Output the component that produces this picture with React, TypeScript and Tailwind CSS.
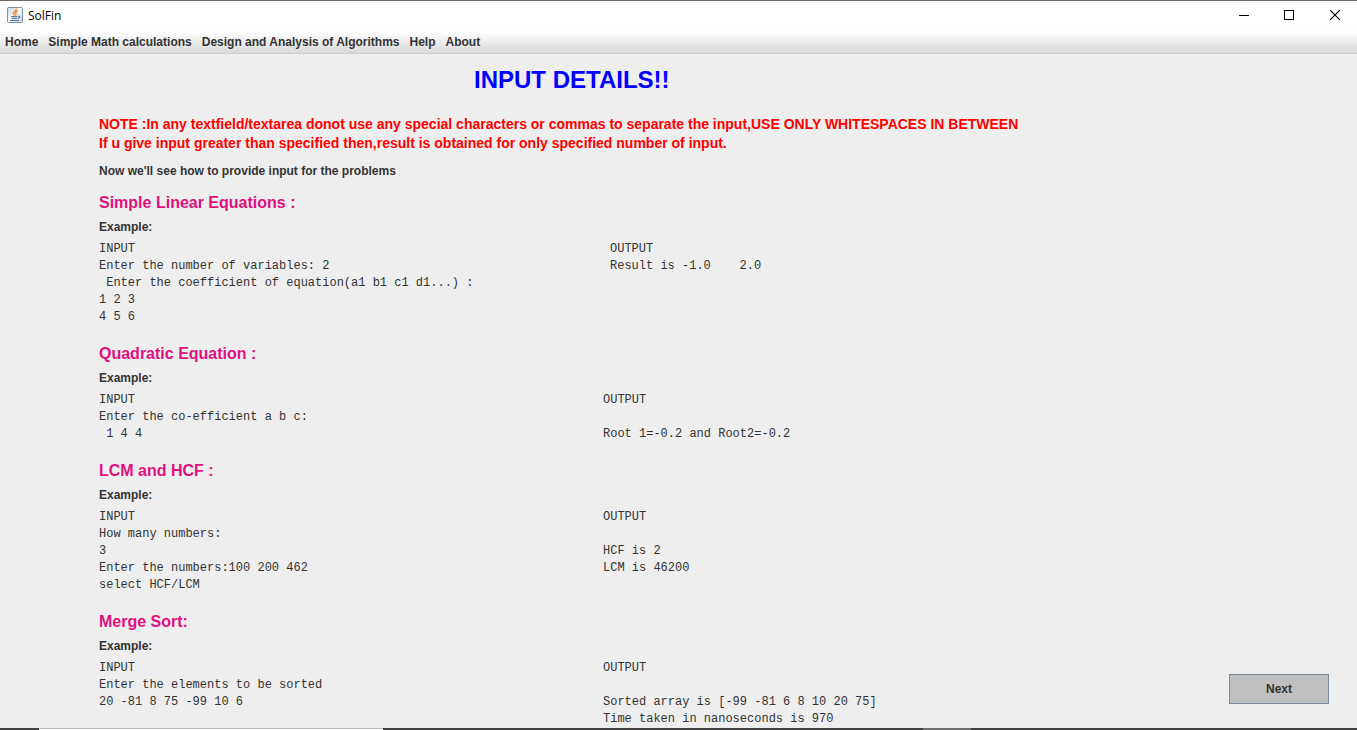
import React from "react";

type Problem = {
  title: string;
  input: string[];
  output: string[];
  wide?: boolean;
};

const problems: Problem[] = [
  {
    title: "Simple Linear Equations :",
    input: [
      "INPUT",
      "Enter the number of variables: 2",
      " Enter the coefficient of equation(a1 b1 c1 d1...) :",
      "1 2 3",
      "4 5 6",
    ],
    output: ["OUTPUT", "Result is -1.0    2.0"],
    wide: true,
  },
  {
    title: "Quadratic Equation :",
    input: ["INPUT", "Enter the co-efficient a b c:", " 1 4 4"],
    output: ["OUTPUT", "", "Root 1=-0.2 and Root2=-0.2"],
  },
  {
    title: "LCM and HCF :",
    input: ["INPUT", "How many numbers:", "3", "Enter the numbers:100 200 462", "select HCF/LCM"],
    output: ["OUTPUT", "", "HCF is 2", "LCM is 46200"],
  },
  {
    title: "Merge Sort:",
    input: ["INPUT", "Enter the elements to be sorted", "20 -81 8 75 -99 10 6"],
    output: ["OUTPUT", "", "Sorted array is [-99 -81 6 8 10 20 75]", "Time taken in nanoseconds is 970"],
  },
];

const menus = ["Home", "Simple Math calculations", "Design and Analysis of Algorithms", "Help", "About"];

function JavaIcon() {
  return (
    <svg width="16" height="16" viewBox="0 0 16 16" aria-hidden="true">
      <defs>
        <linearGradient id="tile" x1="0" y1="0" x2="1" y2="1">
          <stop offset="0" stopColor="#c3d3df" />
          <stop offset="0.45" stopColor="#f8fafb" />
          <stop offset="1" stopColor="#c6d4df" />
        </linearGradient>
      </defs>
      <rect x="0.5" y="0.5" width="15" height="15" rx="1" fill="url(#tile)" stroke="#7690a4" />
      <path d="M9.3 1.800C10 4 6 4.300 6.300 6.200C6.500 7.200 7.600 7.700 7.500 8.600M10.700 4.200C8.500 5 8 5.800 9 6.900C9.400 7.500 9 8.100 8.500 8.500" fill="none" stroke="#ee8130" strokeWidth="1.400" />
      <path d="M4 9.500H10.500M4.800 11.400H10M3 13.500H12M11 9.200C13.500 8.800 13.200 11.200 10.800 11.400" fill="none" stroke="#55799a" strokeWidth="1.100" />
    </svg>
  );
}

function TitleBar() {
  return (
    <header className="flex h-[31px] shrink-0 items-center border-t border-[#6b6b6b] bg-white pb-[2px] pl-[7px]">
      <JavaIcon />
      <h1 className="ml-[5px] grow pt-[2px] font-['Open_Sans','Noto_Sans',sans-serif] text-[12px] leading-4 text-black">SolFin</h1>
      <button aria-label="Minimize" className="flex h-full w-[45px] items-center justify-center">
        <svg width="11" height="10" viewBox="0 0 11 10" shapeRendering="crispEdges"><path d="M0 5.500H10" stroke="#000" /></svg>
      </button>
      <button aria-label="Maximize" className="flex h-full w-[45px] items-center justify-center">
        <svg width="11" height="10" viewBox="0 0 11 10" shapeRendering="crispEdges"><path d="M.5 .5H9.500V9.500H.5Z" fill="none" stroke="#000" /></svg>
      </button>
      <button aria-label="Close" className="flex h-full w-[45px] items-center justify-center">
        <svg width="10" height="10" viewBox="0 0 10 10"><path d="M0 0L10 10M10 0L0 10" stroke="#000" strokeWidth="1.200" /></svg>
      </button>
    </header>
  );
}

function Example({ problem }: { problem: Problem }) {
  return (
    <section className="mb-[18px]">
      <h3 className="text-[16px] font-bold leading-5 text-[#e01080]">{problem.title}</h3>
      <p className="mt-[6px] text-[12px] font-bold leading-4">Example:</p>
      <div className="mt-[6px] flex font-['Liberation_Mono',monospace] text-[12px] leading-[17px]">
        <pre className={`shrink-0 font-[inherit] ${problem.wide ? "w-[511px]" : "w-[504px]"}`}>{problem.input.join("\n")}</pre>
        <pre className="font-[inherit]">{problem.output.join("\n")}</pre>
      </div>
    </section>
  );
}

export default function App() {
  return (
    <div className="flex h-screen flex-col overflow-hidden bg-[#eeeeee] font-['Liberation_Sans',Arial,sans-serif] text-[#333333]">
      <TitleBar />
      <nav className="flex h-[23px] shrink-0 items-center gap-[10px] border-b border-[#cccccc] bg-linear-to-b from-white to-[#dadada] pl-[5px] text-[12px] font-bold leading-4">
        {menus.map((m) => (
          <button key={m}>{m}</button>
        ))}
      </nav>
      <div className="relative min-h-0 grow">
        <main className="h-full overflow-hidden pl-[99px]">
          <h2 className="pl-[375px] pt-3 text-[24px] font-bold leading-7 text-[#0000ff]">INPUT DETAILS!!</h2>
          <p className="mt-[21px] text-[14px] font-bold leading-[19px] text-[#ff0000]">
            NOTE :In any textfield/textarea donot use any special characters or commas to separate the input,USE ONLY WHITESPACES IN BETWEEN
            <br />
            If u give input greater than specified then,result is obtained for only specified number of input.
          </p>
          <p className="mb-[14px] mt-[10px] text-[12px] font-bold leading-4">Now we'll see how to provide input for the problems</p>
          {problems.map((p) => (
            <Example key={p.title} problem={p} />
          ))}
        </main>
        <button className="absolute bottom-6 right-7 h-[30px] w-[100px] border border-[#7a8a99] bg-[#c0c0c0] text-[12px] font-bold">Next</button>
      </div>
      <footer className="flex h-[2px] shrink-0 bg-[#434143]">
        <div className="ml-[39px] w-[344px] border-t border-[#bbbbbb] bg-white" />
        <div className="ml-[540px] w-12 bg-[#706e70]" />
      </footer>
    </div>
  );
}
